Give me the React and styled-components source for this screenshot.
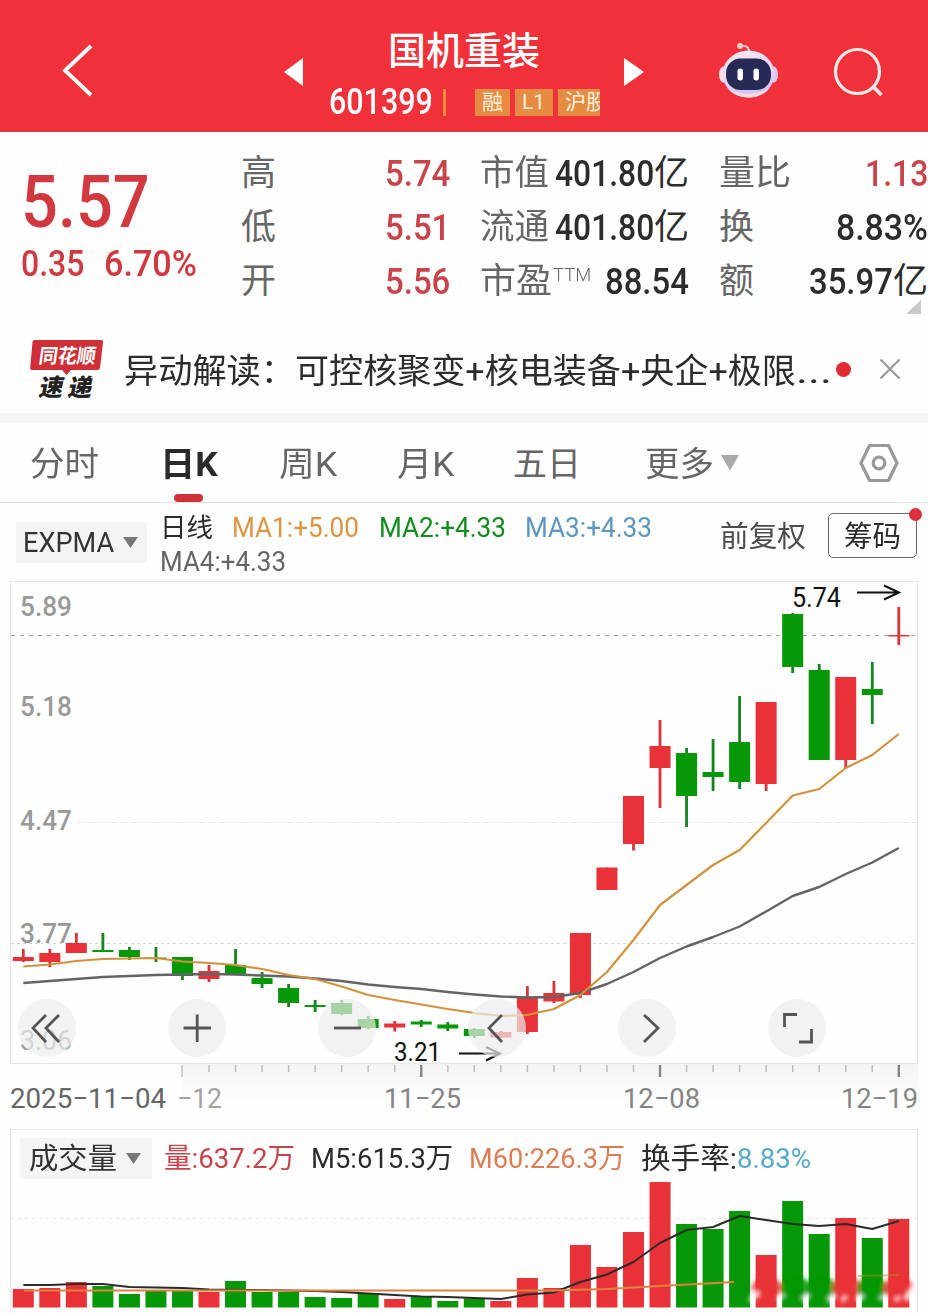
import React, { useLayoutEffect, useRef, useState } from 'react'
import styled, { createGlobalStyle } from 'styled-components'

const GlobalStyle = createGlobalStyle`
body{
  margin:0;
  background:#fefefe;
  font-family:Roboto, "Noto Sans CJK SC", sans-serif;
  color:#2c2c2c;
}
*{
  box-sizing:border-box;
}
`

const Page = styled.div`
width:928px;
height:1313px;
overflow:hidden;
display:flex;
flex-direction:column;
background:#fefefe;
`

const FitBox = styled.span`
display:inline-block;
flex:none;
white-space:nowrap;
width:${p => p.$w}px;
margin-left:${p => p.$ml || 0}px;
font-size:${p => p.$size}px;
line-height:${p => p.$lh || 40}px;
font-weight:${p => p.$weight || 400};
color:${p => p.$color || "inherit"};
`
const FitInner = styled.span`
display:inline-block;
transform-origin:0 50%;
`

function Fit({ w, ml, size, lh, weight, color, children }) {
  const ref = useRef(null)
  const [scale, setScale] = useState(1)

  useLayoutEffect(() => {
    setScale(w / ref.current.offsetWidth)
  }, [w, children])

  return (
    <FitBox $w={w} $ml={ml} $size={size} $lh={lh} $weight={weight} $color={color}>
      <FitInner ref={ref} style={{ transform: `scaleX(${scale})` }}>{children}</FitInner>
    </FitBox>
  )
}

const Header = styled.header`
height:132px;
flex:none;
display:flex;
align-items:flex-start;
background:#f13139;
border-bottom:1px solid #c9434b;
color:#fff;
`
const HeaderIcon = styled.svg`
flex:none;
margin-top:${p => p.$top}px;
margin-left:${p => p.$ml}px;
`
const TitleBlock = styled.div`
width:272px;
margin-left:25px;
padding-top:31px;
display:flex;
flex-direction:column;
`
const TitleLine = styled.div`
display:flex;
height:40px;
padding-left:59px;
`
const CodeLine = styled.div`
display:flex;
align-items:center;
height:28px;
margin-top:17px;
`
const CodeBar = styled.div`
width:3px;
height:27px;
flex:none;
margin:0 29px 0 10px;
background:#f58a3c;
`
const Tag = styled.div`
width:${p => p.$w}px;
height:27px;
flex:none;
margin-right:5px;
padding-left:${p => p.$pad}px;
overflow:hidden;
white-space:nowrap;
background:#e68c42;
color:#fff1dd;
font-size:21px;
line-height:27px;
`

const Quote = styled.section`
height:193px;
flex:none;
display:flex;
position:relative;
`
const PriceBlock = styled.div`
width:241px;
padding:30px 0 0 21px;
color:#d2383f;
`
const PriceChange = styled.div`
display:flex;
margin-top:1px;
`
const StatGrid = styled.div`
display:grid;
grid-template-columns:repeat(3, 209px);
column-gap:30px;
grid-auto-rows:54px;
padding-top:15px;
`
const Stat = styled.div`
display:flex;
align-items:center;
`
const StatLabel = styled.span`
display:flex;
flex:1;
color:#666;
`
const Corner = styled.svg`
position:absolute;
right:7px;
bottom:11px;
`

const News = styled.section`
height:88px;
flex:none;
display:flex;
align-items:center;
padding-left:28px;
`
const NewsLogo = styled.svg`
flex:none;
margin-right:18px;
`
const NewsText = styled.div`
display:flex;
padding-top:3px;
`
const RedDot = styled.i`
width:15px;
height:15px;
margin-left:4px;
border-radius:50%;
background:#e02c31;
`
const CloseIcon = styled.svg`
margin-left:28px;
`
const Divider = styled.div`
height:10px;
flex:none;
background:#f6f6f6;
`

const Tabs = styled.nav`
height:80px;
flex:none;
display:flex;
align-items:center;
padding-left:30px;
border-bottom:1px solid #e2e2e2;
`
const Tab = styled.div`
height:79px;
position:relative;
margin-left:${p => p.$ml || 0}px;
padding-top:21px;
color:${p => p.$active ? "#2a2a2a" : "#666"};
&::after{
  content:"";
  display:${p => p.$active ? "block" : "none"};
  position:absolute;
  left:14px;
  bottom:0;
  width:29px;
  height:8px;
  border-radius:4px;
  background:#cf3339;
}
`
const TabIcon = styled.svg`
margin-left:${p => p.$ml}px;
`

const Indicators = styled.section`
height:71px;
flex:none;
display:flex;
align-items:flex-start;
padding-left:16px;
`
const Picker = styled.div`
display:flex;
align-items:center;
flex:none;
width:${p => p.$w}px;
height:41px;
margin-top:${p => p.$top}px;
padding-left:${p => p.$pad}px;
border-radius:3px;
background:#f4f4f4;
color:#333;
`
const PickerArrow = styled.svg`
margin-left:9px;
`
const MaList = styled.div`
width:573px;
padding:8px 0 0 13px;
`
const MaLine = styled.div`
display:flex;
height:34px;
align-items:center;
`
const Adjust = styled.div`
padding-top:14px;
color:#4c4c4c;
`
const ChipButton = styled.div`
position:relative;
width:89px;
height:45px;
margin:10px 0 0 22px;
padding:4px 0 0 15px;
border:1px solid #6b6b6b;
border-radius:5px;
&::after{
  content:"";
  position:absolute;
  right:-6px;
  top:-6px;
  width:13px;
  height:13px;
  border-radius:50%;
  background:#dd2f3d;
}
`

const ChartBox = styled.section`
position:relative;
flex:none;
height:555px;
`
const Svg = styled.svg`
display:block;
`
const ChartButtons = styled.div`
position:absolute;
left:18px;
top:425px;
display:flex;
gap:92px;
`
const RoundButton = styled.div`
width:58px;
height:58px;
border-radius:50%;
background:rgba(236,236,236,0.7);
`

const VolumePanel = styled.section`
flex:1;
margin:0 10px;
border:1px solid #e8e8e8;
border-bottom:0;
`
const VolumeLegend = styled.div`
display:flex;
height:48px;
padding-left:9px;
`
const LegendItems = styled.div`
display:flex;
padding-top:9px;
`

const RED = "#e93237"
const GREEN = "#069806"

// [up, high, low, bodyTop, bodyBottom, volumeTop]
const candles = [
  [1, 949, 962, 957, 961, 1289], [1, 949, 967, 953, 962, 1288],
  [1, 933, 953, 943, 953, 1282], [0, 933, 952, 950, 952, 1286],
  [0, 947, 960, 950, 957, 1294], [0, 947, 962, 957.5, 959, 1290],
  [0, 957, 980, 957, 976, 1290], [1, 965, 982, 971, 979, 1292],
  [0, 949, 974, 965, 974.5, 1281], [0, 972, 988, 978, 984, 1292],
  [0, 984, 1007, 988, 1003, 1292], [0, 1000, 1012, 1005, 1007, 1297],
  [0, 1000, 1015, 1003, 1014, 1298], [0, 1016, 1029, 1019, 1028, 1293],
  [1, 1021, 1031.5, 1023.5, 1027.5, 1299], [0, 1020, 1027, 1021.5, 1024.5, 1297],
  [0, 1022, 1031, 1024.5, 1028.5, 1301], [0, 1028, 1038, 1029, 1036, 1298.5],
  [1, 1031, 1038, 1032, 1037.5, 1301], [1, 986, 1034, 997, 1032, 1278],
  [1, 981, 1003, 993, 1001.5, 1288], [1, 933, 998, 933, 995, 1245],
  [1, 867.5, 890, 867.5, 890, 1267], [1, 796, 850.5, 796, 844, 1232],
  [1, 720, 808, 746, 768, 1182], [0, 748, 827, 753, 796, 1224],
  [0, 739, 791, 772, 777, 1229], [0, 696, 789, 742, 782, 1211],
  [1, 702, 791, 702, 784, 1255], [0, 613, 673, 614, 667, 1201],
  [0, 664, 760, 670, 760, 1234], [1, 677, 768, 677, 760, 1218],
  [0, 662, 724, 689, 695, 1238], [1, 607, 645, 635, 636.5, 1219],
]
const ma1 = [966.5, 964.5, 961, 959, 958.5, 958, 961.5, 963, 965, 969, 975, 979, 986.5, 995, 1000, 1004.5, 1009, 1013, 1016, 1015, 1009, 995, 972, 940, 905, 885, 865, 850, 823, 795.5, 789, 768, 755, 734]
const ma2 = [983, 981, 979, 977, 976, 975, 974.5, 974, 974.5, 975.5, 976.5, 978.5, 981, 984.5, 987, 989, 992, 994.5, 996.5, 997.5, 997, 993, 984, 972, 958, 946.5, 937, 926.5, 911.5, 896, 887, 874, 862.5, 848]
const vol5 = [1285, 1285, 1284, 1284, 1287, 1287.5, 1288, 1289.5, 1290, 1290, 1290.5, 1291, 1292, 1293.5, 1295, 1296.5, 1297, 1298, 1299, 1294.5, 1292.5, 1282, 1274.5, 1262, 1243, 1230, 1227, 1216, 1220, 1224, 1226, 1224, 1229, 1221]

const cx = (i) => 23.3 + i * 26.53
const line = (list) => list.map((y, i) => `${cx(i)},${y}`).join(" ")

function AxisText({ x, y, w, size = 28, fill = "#999", weight = 400, children }) {
  return (
    <text x={x} y={y} textLength={w} lengthAdjust="spacingAndGlyphs" fontSize={size} fontWeight={weight} fill={fill}>{children}</text>
  )
}

function KChart() {
  return (
    <Svg width="928" height="555" viewBox="0 574 928 555">
      <defs>
        <linearGradient id="strip" x1="0" x2="0" y1="0" y2="1">
          <stop offset="0" stopColor="#f5f5f5" />
          <stop offset="1" stopColor="#fefefe" />
        </linearGradient>
      </defs>
      <rect x="182" y="1064" width="736" height="40" fill="url(#strip)" />
      <rect x="10.5" y="581.5" width="907" height="482" fill="none" stroke="#e6e6e6" />
      <path d="M11 635.5H917" stroke="#a3a3a3" strokeDasharray="4 5" />
      <path d="M76 822.5H917" stroke="#ececec" strokeDasharray="8 3" />
      <path d="M11 943.5H917" stroke="#d4d4d4" strokeDasharray="3 3" />
      <AxisText x="20" y="615.5" w="52" weight="500">5.89</AxisText>
      <AxisText x="20" y="715.5" w="52" weight="500">5.18</AxisText>
      <AxisText x="20" y="829.5" w="52" weight="500">4.47</AxisText>
      <AxisText x="20" y="943" w="52" weight="500">3.77</AxisText>
      <AxisText x="20" y="1050" w="52">3.06</AxisText>
      {candles.map(([up, high, low, top, bottom], i) => (
        <g key={i} fill={up ? RED : GREEN}>
          <rect x={cx(i) - 1.4} y={high} width="2.8" height={low - high} fill={up ? "#d8343b" : "#158320"} />
          <rect x={cx(i) - 10.5} y={top} width="21" height={bottom - top} />
        </g>
      ))}
      <polyline points={line(ma2)} fill="none" stroke="#646466" strokeWidth="2.4" strokeLinejoin="round" />
      <polyline points={line(ma1)} fill="none" stroke="#d2923c" strokeWidth="2.2" strokeLinejoin="round" />
      <AxisText x="792" y="607" w="49" size="27" fill="#111">5.74</AxisText>
      <path d="M857 592.5H898M884 585.5L899 592.5L884 599.5" fill="none" stroke="#111" strokeWidth="2" />
      <AxisText x="394" y="1060.5" w="47" size="26" fill="#111">3.21</AxisText>
      <path d="M459 1053.5H499M486 1047L500 1053.5L486 1060.5" fill="none" stroke="#111" strokeWidth="2" />
      {candles.map((c, i) => i > 5 && (
        <rect
          key={i}
          x={cx(i) - (i % 9 === 6 ? 1.2 : 0.7)}
          y="1065"
          width={i % 9 === 6 && i > 6 ? 2.4 : 1.4}
          height={i % 9 === 6 ? 12 : 7}
          fill={i % 9 === 6 && i > 6 ? "#858585" : "#bcbcbc"}
        />
      ))}
      <AxisText x="10" y="1108" w="156" fill="#666">2025−11−04</AxisText>
      <AxisText x="177" y="1108" w="45" fill="#a2a2a2">−12</AxisText>
      <AxisText x="384" y="1108" w="77" fill="#858585">11−25</AxisText>
      <AxisText x="623" y="1108" w="77" fill="#858585">12−08</AxisText>
      <AxisText x="841" y="1108" w="77" fill="#858585">12−19</AxisText>
    </Svg>
  )
}

const buttonPaths = [
  "M28 16L15 29L28 43M41 16L28 29L41 43",
  "M15.5 29H43M29.2 15.5V43",
  "M16 29H43",
  "M34 16L21 29L34 43",
  "M26 16L40 29L26 43",
  "M16.5 28V15.5H29M31 43H43.5V30",
]

// soft smudges over the last six volume bars
const smudges = [[767, RED], [796, GREEN], [822, GREEN], [847, RED], [872, GREEN], [898, RED]]

function VolumeChart() {
  return (
    <Svg width="906" height="135" viewBox="11 1178 906 135">
      <defs>
        <filter id="soft" x="-30%" y="-60%" width="160%" height="220%">
          <feGaussianBlur stdDeviation="2" />
        </filter>
      </defs>
      <path d="M11 1218.5H917" stroke="#e4e4e4" strokeDasharray="3 4" />
      {candles.map((c, i) => (
        <rect key={i} x={cx(i) - 10.5} y={c[5]} width="21" height={1307.5 - c[5]} fill={c[0] ? RED : GREEN} />
      ))}
      <polyline points={line(vol5)} fill="none" stroke="#2b2b2b" strokeWidth="2" strokeLinejoin="round" />
      <path d="M24 1290.5H554L607 1289L660 1286L734 1282" fill="none" stroke="#dd8240" strokeWidth="2.2" />
      <g filter="url(#soft)">
        {smudges.map(([x, fill]) => (
          <ellipse key={x} cx={x} cy="1288" rx="15" ry="11" fill={fill} opacity="0.85" />
        ))}
        <path d="M750 1301L758 1292M803 1301L808 1295M829 1302L834 1295M858 1301L862 1295M906 1300L914 1288" stroke="#fff" strokeWidth="5" opacity="0.9" />
        <path d="M778 1300L784 1295M880 1300L885 1295M842 1302L846 1296M895 1301L900 1297" stroke="#fff" strokeWidth="3.5" opacity="0.8" />
      </g>
      <path d="M858 1276L899 1275" fill="none" stroke="#b08a2c" strokeWidth="2" opacity="0.5" />
    </Svg>
  )
}

function App() {
  return (
    <Page>
      <GlobalStyle />
      <Header>
        <HeaderIcon $top={42} $ml={60} width="36" height="58" viewBox="60 42 36 58">
          <path d="M91 46L65 70.5L91 95" fill="none" stroke="#fff" strokeWidth="3.8" />
        </HeaderIcon>
        <HeaderIcon $top={57} $ml={188} width="20" height="30">
          <path d="M0 15L19 1V29Z" fill="#fff" />
        </HeaderIcon>
        <TitleBlock>
          <TitleLine>
            <Fit w={152} size={38} weight={500}>国机重装</Fit>
          </TitleLine>
          <CodeLine>
            <Fit w={104} size={36} weight={500}>601399</Fit>
            <CodeBar />
            <Tag $w={35} $pad={7}>融</Tag>
            <Tag $w={38} $pad={7}>L1</Tag>
            <Tag $w={42} $pad={7}>沪股</Tag>
          </CodeLine>
        </TitleBlock>
        <HeaderIcon $top={57} $ml={23} width="20" height="30">
          <path d="M0 1V29L20 15Z" fill="#fff" />
        </HeaderIcon>
        <HeaderIcon $top={40} $ml={74} width="62" height="62" viewBox="718 40 62 62">
          <defs>
            <linearGradient id="shell" x1="0" x2="0.3" y1="0" y2="1">
              <stop offset="0" stopColor="#ffe9ee" />
              <stop offset="0.6" stopColor="#e4d6f4" />
              <stop offset="1" stopColor="#cfc4f5" />
            </linearGradient>
          </defs>
          <path d="M740 46C746 45 749 47 749 52" fill="none" stroke="#f9cfd6" strokeWidth="2" />
          <circle cx="740" cy="46" r="3" fill="#ffc9cd" />
          <ellipse cx="723.5" cy="74.5" rx="4.5" ry="8" fill="#ffdfe5" />
          <ellipse cx="773.5" cy="74.5" rx="4.5" ry="8" fill="#e3c6ee" />
          <ellipse cx="748.5" cy="74" rx="26" ry="23.5" fill="url(#shell)" />
          <path d="M727 88Q748 100 770 88Q762 97.5 748.5 97.5Q735 97.5 727 88Z" fill="#ffdce4" />
          <rect x="726" y="58.5" width="45" height="31.5" rx="14.5" fill="#262a54" />
          <rect x="737.5" y="68.5" width="5.5" height="12" rx="2.7" fill="#fff" />
          <rect x="753.5" y="68.5" width="5.5" height="12" rx="2.7" fill="#fff" />
        </HeaderIcon>
        <HeaderIcon $top={45} $ml={52} width="54" height="54" viewBox="832 45 54 54">
          <circle cx="857.5" cy="71.5" r="22" fill="none" stroke="#ffeaea" strokeWidth="3.2" />
          <path d="M873.5 87L881.5 95" stroke="#ffeaea" strokeWidth="3.8" />
        </HeaderIcon>
      </Header>

      <Quote>
        <PriceBlock>
          <Fit w={129} size={73} lh={81} weight={500}>5.57</Fit>
          <PriceChange>
            <Fit w={63} size={36} weight={500}>0.35</Fit>
            <Fit w={93} ml={20} size={36} weight={500}>6.70%</Fit>
          </PriceChange>
        </PriceBlock>
        <StatGrid>
          <Stat>
            <StatLabel><Fit w={35} size={35}>高</Fit></StatLabel>
            <Fit w={65} size={36} weight={500} color="#c9444a">5.74</Fit>
          </Stat>
          <Stat>
            <StatLabel><Fit w={69} size={35}>市值</Fit></StatLabel>
            <Fit w={99} size={36} weight={500}>401.80</Fit>
            <Fit w={35} size={35}>亿</Fit>
          </Stat>
          <Stat>
            <StatLabel><Fit w={72} size={35}>量比</Fit></StatLabel>
            <Fit w={63} size={36} weight={500} color="#c9444a">1.13</Fit>
          </Stat>
          <Stat>
            <StatLabel><Fit w={35} size={35}>低</Fit></StatLabel>
            <Fit w={65} size={36} weight={500} color="#c9444a">5.51</Fit>
          </Stat>
          <Stat>
            <StatLabel><Fit w={69} size={35}>流通</Fit></StatLabel>
            <Fit w={99} size={36} weight={500}>401.80</Fit>
            <Fit w={35} size={35}>亿</Fit>
          </Stat>
          <Stat>
            <StatLabel><Fit w={35} size={35}>换</Fit></StatLabel>
            <Fit w={92} size={36} weight={500}>8.83%</Fit>
          </Stat>
          <Stat>
            <StatLabel><Fit w={35} size={35}>开</Fit></StatLabel>
            <Fit w={65} size={36} weight={500} color="#c9444a">5.56</Fit>
          </Stat>
          <Stat>
            <StatLabel>
              <Fit w={72} size={35}>市盈</Fit>
              <Fit w={38} ml={1} size={18} lh={26} weight={300}>TTM</Fit>
            </StatLabel>
            <Fit w={84} size={36} weight={500}>88.54</Fit>
          </Stat>
          <Stat>
            <StatLabel><Fit w={35} size={35}>额</Fit></StatLabel>
            <Fit w={84} size={36} weight={500}>35.97</Fit>
            <Fit w={35} size={35}>亿</Fit>
          </Stat>
        </StatGrid>
        <Corner width="15" height="14">
          <path d="M15 0V14H0Z" fill="#c9c9c9" />
        </Corner>
      </Quote>

      <News>
        <NewsLogo width="78" height="64" viewBox="28 336 78 64">
          <path d="M34.5 339H101Q103.5 339 103 341.5L100 367Q99.6 369 97.5 369H71L66.5 374L62 369H32Q29.8 369 30.2 366.5L32.5 341Q32.8 339 34.5 339Z" fill="#cf3037" />
          <text transform="translate(38 362) skewX(-8)" textLength="57" lengthAdjust="spacingAndGlyphs" fontSize="20" fontWeight="700" fill="#fff">同花顺</text>
          <text transform="translate(38 395) skewX(-12)" textLength="53" fontSize="24" fontWeight="900" fill="#222">速递</text>
        </NewsLogo>
        <NewsText>
          <Fit w={171} size={34}>异动解读：</Fit>
          <Fit w={501} size={34}>可控核聚变+核电装备+央企+极限</Fit>
          <Fit w={36} size={34}>...</Fit>
        </NewsText>
        <RedDot />
        <CloseIcon width="22" height="22">
          <path d="M1.5 1.5L20.5 20.5M20.5 1.5L1.5 20.5" stroke="#999" strokeWidth="2.2" />
        </CloseIcon>
      </News>
      <Divider />

      <Tabs>
        <Tab><Fit w={69} size={34}>分时</Fit></Tab>
        <Tab $active $ml={61}><Fit w={58} size={34} weight={700}>日K</Fit></Tab>
        <Tab $ml={61}><Fit w={58} size={34}>周K</Fit></Tab>
        <Tab $ml={60}><Fit w={57} size={34}>月K</Fit></Tab>
        <Tab $ml={59}><Fit w={68} size={34}>五日</Fit></Tab>
        <Tab $ml={64}><Fit w={69} size={34}>更多</Fit></Tab>
        <TabIcon $ml={7} width="18" height="16"><path d="M0 0H18L9 15.5Z" fill="#aaa" /></TabIcon>
        <TabIcon $ml={119} width="42" height="42" viewBox="-21 -21 42 42">
          <path d="M-9.500 -17.500H9.500L18 0L9.500 17.500H-9.500L-18 0Z" fill="none" stroke="#999" strokeWidth="3.2" strokeLinejoin="round" />
          <circle r="5.8" fill="none" stroke="#999" strokeWidth="3.2" />
        </TabIcon>
      </Tabs>

      <Indicators>
        <Picker $w={131} $top={19} $pad={7}>
          <Fit w={91} size={28}>EXPMA</Fit>
          <PickerArrow width="15" height="11"><path d="M0 0H15L7.5 11Z" fill="#777" /></PickerArrow>
        </Picker>
        <MaList>
          <MaLine>
            <Fit w={53} size={26}>日线</Fit>
            <Fit w={127} ml={19} size={28} color="#dd9440">MA1:+5.00</Fit>
            <Fit w={127} ml={20} size={28} color="#128c1c">MA2:+4.33</Fit>
            <Fit w={127} ml={19} size={28} color="#5c97c2">MA3:+4.33</Fit>
          </MaLine>
          <MaLine>
            <Fit w={126} size={28} color="#666">MA4:+4.33</Fit>
          </MaLine>
        </MaList>
        <Adjust><Fit w={86} size={29}>前复权</Fit></Adjust>
        <ChipButton><Fit w={57} size={29} lh={38}>筹码</Fit></ChipButton>
      </Indicators>

      <ChartBox>
        <KChart />
        <ChartButtons>
          {buttonPaths.map((d) => (
            <RoundButton key={d}>
              <Svg width="58" height="58"><path d={d} fill="none" stroke="#555" strokeWidth="2.8" /></Svg>
            </RoundButton>
          ))}
        </ChartButtons>
      </ChartBox>

      <VolumePanel>
        <VolumeLegend>
          <Picker $w={132} $top={8} $pad={9}>
            <Fit w={88} size={29}>成交量</Fit>
            <PickerArrow width="15" height="11"><path d="M0 0H15L7.5 11Z" fill="#777" /></PickerArrow>
          </Picker>
          <LegendItems>
            <Fit w={131} ml={12} size={28} color="#c9444a">量:637.2万</Fit>
            <Fit w={142} ml={16} size={28}>M5:615.3万</Fit>
            <Fit w={156} ml={16} size={28} color="#dc7d52">M60:226.3万</Fit>
            <Fit w={96} ml={16} size={29}>换手率:</Fit>
            <Fit w={74} size={28} color="#55a9cc">8.83%</Fit>
          </LegendItems>
        </VolumeLegend>
        <VolumeChart />
      </VolumePanel>
    </Page>
  )
}

export default App;
